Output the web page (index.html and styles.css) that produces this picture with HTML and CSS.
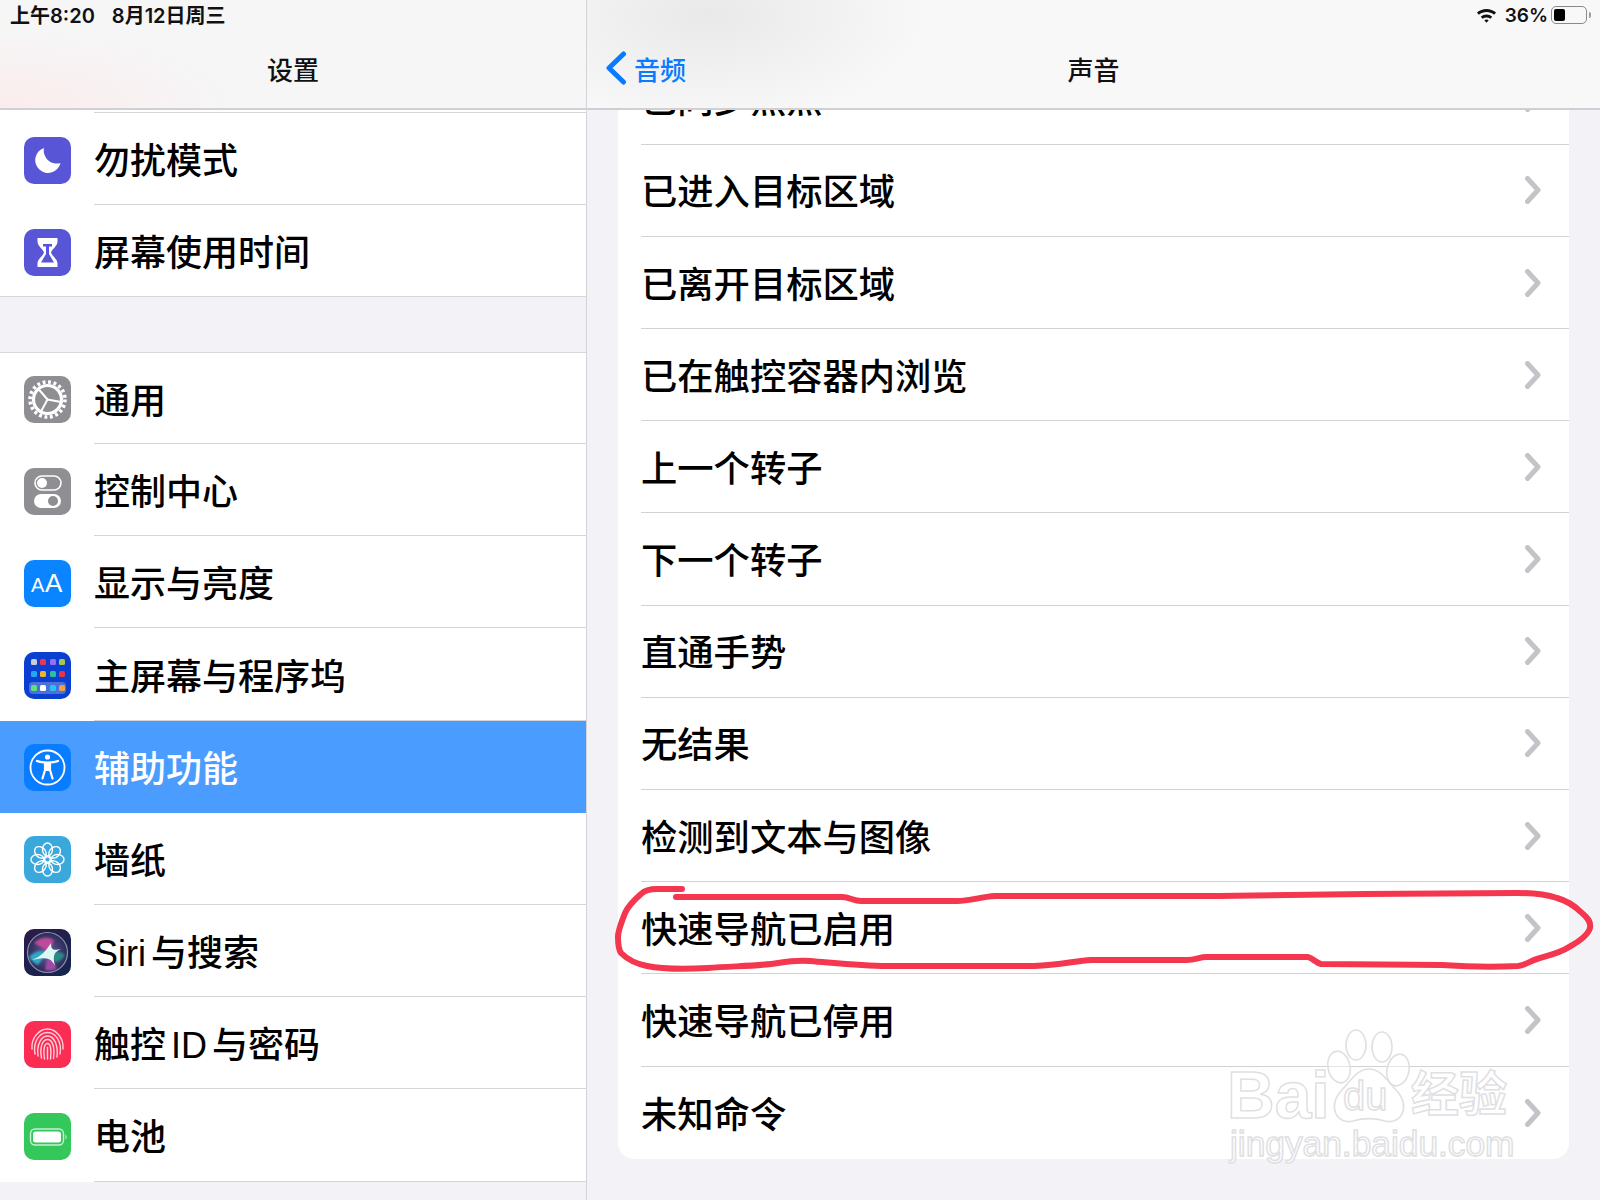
FILE: index.html
```html
<!DOCTYPE html>
<html lang="zh-CN">
<head>
  <meta charset="UTF-8">
  <title>声音</title>
  <link rel="stylesheet" href="styles.css">
</head>
<body>
<div class="ipad">

  <!-- left pane -->
  <div class="side">
    <div class="top top-side">
      <div class="status">
        <span>上午8:20</span>
        <span>8月12日周三</span>
      </div>
      <div class="nav"><span class="nav-title">设置</span></div>
    </div>
    <div class="side-scroll">
      <div class="group group-first">
        <div class="item">
          <svg class="icon" viewBox="0 0 47 47"><rect width="47" height="47" rx="10" fill="#5856d6"/><path d="M20 11 A12.8 12.8 0 1 0 36.5 26 A13 13 0 0 1 20 11 Z" fill="#fff"/></svg>
          <div class="item-text">勿扰模式</div>
        </div>
        <div class="item">
          <svg class="icon" viewBox="0 0 47 47"><rect width="47" height="47" rx="10" fill="#5856d6"/><path d="M13.5 9 H33.5 V12.5 C33.5 17 28 20 27 23.5 C28 27 33.5 30 33.5 34.5 V38 H13.5 V34.5 C13.5 30 19 27 20 23.5 C19 20 13.5 17 13.5 12.5 Z" fill="#fff"/><path d="M19 15 H28 V17.5 H25 V25 L30 33.5 H17 L22 25 V17.5 H19 Z" fill="#5856d6"/></svg>
          <div class="item-text">屏幕使用时间</div>
        </div>
      </div>

      <div class="group">
        <div class="item">
          <svg class="icon" viewBox="0 0 47 47"><rect width="47" height="47" rx="10" fill="#8e8e93"/><circle cx="23.5" cy="23.5" r="17.5" fill="none" stroke="#fff" stroke-width="3.6" stroke-dasharray="2.9 2.6"/><circle cx="23.5" cy="23.5" r="14" fill="none" stroke="#fff" stroke-width="3.2"/><path d="M23.5 23.5 L14.5 13 M23.5 23.5 L37 26 M23.5 23.5 L17 35.5" stroke="#fff" stroke-width="2" fill="none"/></svg>
          <div class="item-text">通用</div>
        </div>
        <div class="item">
          <svg class="icon" viewBox="0 0 47 47"><rect width="47" height="47" rx="10" fill="#8e8e93"/><rect x="11" y="8" width="26" height="14" rx="7" fill="none" stroke="#fff" stroke-width="1.6"/><circle cx="18" cy="15" r="5" fill="#fff"/><rect x="10" y="26" width="27" height="14" rx="7" fill="#fff"/><circle cx="29" cy="33" r="5" fill="#8e8e93"/></svg>
          <div class="item-text">控制中心</div>
        </div>
        <div class="item">
          <svg class="icon" viewBox="0 0 47 47"><rect width="47" height="47" rx="10" fill="#0a84ff"/><text x="7" y="32" class="icon-a-small">A</text><text x="21" y="32" class="icon-a-big">A</text></svg>
          <div class="item-text">显示与亮度</div>
        </div>
        <div class="item">
          <svg class="icon" viewBox="0 0 47 47">
            <rect width="47" height="47" rx="10" fill="#0b3fd0"/>
            <rect x="7" y="7" width="6" height="6" rx="1.5" fill="#c9cdd8"/><rect x="16" y="7" width="6" height="6" rx="1.5" fill="#e8385a"/><rect x="26" y="7" width="6" height="6" rx="1.5" fill="#9a6cf0"/><rect x="35" y="7" width="6" height="6" rx="1.5" fill="#a8c84a"/>
            <rect x="7" y="19" width="6" height="6" rx="1.5" fill="#22a7f0"/><rect x="16" y="19" width="6" height="6" rx="1.5" fill="#f0b429"/><rect x="26" y="19" width="6" height="6" rx="1.5" fill="#2cc09a"/><rect x="35" y="19" width="6" height="6" rx="1.5" fill="#e8344a"/>
            <rect x="5" y="30" width="37" height="12" rx="4" fill="#4a72d8"/>
            <rect x="7" y="33" width="6" height="6" rx="1.5" fill="#5ee07a"/><rect x="16" y="33" width="6" height="6" rx="1.5" fill="#fff"/><rect x="26" y="33" width="6" height="6" rx="1.5" fill="#2cc0f0"/><rect x="35" y="33" width="6" height="6" rx="1.5" fill="#f0a040"/>
          </svg>
          <div class="item-text">主屏幕与程序坞</div>
        </div>
        <div class="item item-active">
          <svg class="icon" viewBox="0 0 47 47"><rect width="47" height="47" rx="10" fill="#0a7cff"/><circle cx="23.5" cy="23.5" r="17" fill="none" stroke="#fff" stroke-width="1.8"/><circle cx="23.5" cy="13" r="2.6" fill="#fff"/><path d="M13 17 C18 19 29 19 34 17 M21 19.5 V26 L18.5 34.5 M26 19.5 V26 L28.5 34.5 M21 26 H26" fill="none" stroke="#fff" stroke-width="2.2" stroke-linecap="round"/><path d="M21 19 H26 V26 H21 Z" fill="#fff"/></svg>
          <div class="item-text">辅助功能</div>
        </div>
        <div class="item">
          <svg class="icon" viewBox="0 0 47 47">
            <rect width="47" height="47" rx="10" fill="#3ba8db"/>
            <g fill="none" stroke="#fff" stroke-width="1.4">
              <circle cx="23.5" cy="23.5" r="2.8"/>
              <ellipse cx="23.5" cy="13.5" rx="5" ry="6.5"/>
              <ellipse cx="23.5" cy="33.5" rx="5" ry="6.5"/>
              <ellipse cx="13.5" cy="23.5" rx="6.5" ry="5"/>
              <ellipse cx="33.5" cy="23.5" rx="6.5" ry="5"/>
              <ellipse cx="16.4" cy="16.4" rx="5" ry="6.5" transform="rotate(-45 16.4 16.4)"/>
              <ellipse cx="30.6" cy="16.4" rx="5" ry="6.5" transform="rotate(45 30.6 16.4)"/>
              <ellipse cx="16.4" cy="30.6" rx="5" ry="6.5" transform="rotate(45 16.4 30.6)"/>
              <ellipse cx="30.6" cy="30.6" rx="5" ry="6.5" transform="rotate(-45 30.6 30.6)"/>
            </g>
          </svg>
          <div class="item-text">墙纸</div>
        </div>
        <div class="item">
          <svg class="icon" viewBox="0 0 47 47">
            <defs>
              <linearGradient id="siriBg" x1="0" y1="0" x2="1" y2="1"><stop offset="0" stop-color="#2c1a4a"/><stop offset="1" stop-color="#14274f"/></linearGradient>
              <radialGradient id="siriDisc" cx="0.5" cy="0.5" r="0.5"><stop offset="0" stop-color="#6a5a9a"/><stop offset="1" stop-color="#2a2c58"/></radialGradient>
              <filter id="siriSoft" x="-20%" y="-20%" width="140%" height="140%"><feGaussianBlur stdDeviation="1.2"/></filter>
              <filter id="siriEdge" x="-20%" y="-20%" width="140%" height="140%"><feGaussianBlur stdDeviation="0.4"/></filter>
            </defs>
            <rect width="47" height="47" rx="10" fill="url(#siriBg)"/>
            <circle cx="23.5" cy="23.5" r="20" fill="url(#siriDisc)" stroke="#8d92a8" stroke-width="1.2"/>
            <g filter="url(#siriSoft)">
              <path d="M10 14 C16 8 26 7 30 12 L25 23 Z" fill="#c04a9a"/>
              <path d="M5 28 C10 22 18 21 24 23 L14 36 C10 34 7 32 5 28 Z" fill="#2fa8c8"/>
              <path d="M24 23 C30 22 36 22 41 26 C38 32 32 34 30 32 Z" fill="#2a8a88"/>
              <path d="M24 23 L33 40 C28 42 24 42 21 41 Z" fill="#a04aa8"/>
            </g>
            <g filter="url(#siriEdge)">
              <path d="M8 31 C15 28 20 25 27 14 C27 20 28 22 37 20 C31 23 28 25 31 37 C27 30 25 27 8 31 Z" fill="#dff8f4"/>
            </g>
          </svg>
          <div class="item-text">Siri 与搜索</div>
        </div>
        <div class="item">
          <svg class="icon" viewBox="0 0 47 47">
            <rect width="47" height="47" rx="10" fill="#fb2d55"/>
            <g fill="none" stroke="#ffd3dc" stroke-width="1.4" stroke-linecap="round">
              <path d="M8 28 C7 17 15 8 23.5 8 C32 8 40 17 39 28"/>
              <path d="M11 33 C9 21 15 11.5 23.5 11.5 C32 11.5 38 21 36 33"/>
              <path d="M14 35 C12.5 24 17 15 23.5 15 C30 15 34.5 24 33 36"/>
              <path d="M17.5 37 C15.5 26 18.5 18.5 23.5 18.5 C28.5 18.5 31 26 29.5 37.5"/>
              <path d="M20.5 38 C19 28 20.5 22.5 23.5 22.5 C26.5 22.5 27.5 28 26.5 38"/>
              <path d="M23.5 26.5 V38"/>
            </g>
          </svg>
          <div class="item-text">触控 ID 与密码</div>
        </div>
        <div class="item">
          <svg class="icon" viewBox="0 0 47 47"><rect width="47" height="47" rx="10" fill="#34c759"/><rect x="6.5" y="16" width="33" height="16" rx="4.5" fill="none" stroke="#c6f0d2" stroke-width="1.4"/><rect x="9" y="18.5" width="28" height="11" rx="2.5" fill="#fff"/><path d="M41.5 21.5 C43 22 43 26 41.5 26.5 Z" fill="#c6f0d2"/></svg>
          <div class="item-text">电池</div>
        </div>
      </div>
    </div>
  </div>

  <!-- right pane -->
  <div class="main">
    <div class="top top-main">
      <div class="status status-right">
        <svg class="wifi" viewBox="0 0 22 16"><path d="M1 5.5 C6.5 0.5 15.5 0.5 21 5.5 L19 7.7 C14.5 3.8 7.5 3.8 3 7.7 Z M5 9.8 C8.5 6.8 13.5 6.8 17 9.8 L15 12 C12.6 10.2 9.4 10.2 7 12 Z M8.7 13.5 C10 12.5 12 12.5 13.3 13.5 L11 16 Z" fill="#111"/></svg>
        <span class="percent">36%</span>
        <span class="battery"><span class="battery-level"></span></span>
        <span class="battery-nub"></span>
      </div>
      <div class="nav">
        <div class="back">
          <svg class="back-arrow" viewBox="0 0 22 34"><path d="M18.5 3 L4 17 L18.5 31" fill="none" stroke="#0a7aff" stroke-width="5" stroke-linecap="round" stroke-linejoin="round"/></svg>
          <span>音频</span>
        </div>
        <span class="nav-title">声音</span>
      </div>
    </div>

    <div class="main-scroll">
      <div class="card">
        <div class="row"><div class="row-inner"><span>已同步焦点</span><svg class="chev" viewBox="0 0 16 28"><path d="M2.5 2.5 L13 14 L2.5 25.5"/></svg></div></div>
        <div class="row"><div class="row-inner"><span>已进入目标区域</span><svg class="chev" viewBox="0 0 16 28"><path d="M2.5 2.5 L13 14 L2.5 25.5"/></svg></div></div>
        <div class="row"><div class="row-inner"><span>已离开目标区域</span><svg class="chev" viewBox="0 0 16 28"><path d="M2.5 2.5 L13 14 L2.5 25.5"/></svg></div></div>
        <div class="row"><div class="row-inner"><span>已在触控容器内浏览</span><svg class="chev" viewBox="0 0 16 28"><path d="M2.5 2.5 L13 14 L2.5 25.5"/></svg></div></div>
        <div class="row"><div class="row-inner"><span>上一个转子</span><svg class="chev" viewBox="0 0 16 28"><path d="M2.5 2.5 L13 14 L2.5 25.5"/></svg></div></div>
        <div class="row"><div class="row-inner"><span>下一个转子</span><svg class="chev" viewBox="0 0 16 28"><path d="M2.5 2.5 L13 14 L2.5 25.5"/></svg></div></div>
        <div class="row"><div class="row-inner"><span>直通手势</span><svg class="chev" viewBox="0 0 16 28"><path d="M2.5 2.5 L13 14 L2.5 25.5"/></svg></div></div>
        <div class="row"><div class="row-inner"><span>无结果</span><svg class="chev" viewBox="0 0 16 28"><path d="M2.5 2.5 L13 14 L2.5 25.5"/></svg></div></div>
        <div class="row"><div class="row-inner"><span>检测到文本与图像</span><svg class="chev" viewBox="0 0 16 28"><path d="M2.5 2.5 L13 14 L2.5 25.5"/></svg></div></div>
        <div class="row"><div class="row-inner"><span>快速导航已启用</span><svg class="chev" viewBox="0 0 16 28"><path d="M2.5 2.5 L13 14 L2.5 25.5"/></svg></div></div>
        <div class="row"><div class="row-inner"><span>快速导航已停用</span><svg class="chev" viewBox="0 0 16 28"><path d="M2.5 2.5 L13 14 L2.5 25.5"/></svg></div></div>
        <div class="row row-last"><div class="row-inner"><span>未知命令</span><svg class="chev" viewBox="0 0 16 28"><path d="M2.5 2.5 L13 14 L2.5 25.5"/></svg></div></div>
      </div>
    </div>
  </div>

  <!-- red pen mark drawn on the screenshot -->
  <svg class="ink" viewBox="0 0 1600 1200">
    <path d="M682 889 L657 889 C650 889 645 890 641 894 C633 901 628 906 625 913 C621 924 618 930 618 937 C618 945 619 950 621 953 C628 960 637 964 647 966 C667 970 690 969 708 968 C735 966 760 966 778 963 C790 961 800 960 810 961 C835 963 860 966 887 966 L1034 966 C1060 965 1075 961 1091 960 L1187 960 C1195 960 1200 957 1206 957 L1308 957 C1314 959 1316 963 1321 964 L1442 965 C1470 967 1500 967 1518 966 C1526 965 1530 961 1537 959 C1550 955 1560 953 1569 947 C1580 941 1588 935 1590 928 C1591 922 1588 918 1582 913 C1575 906 1568 901 1557 898 C1545 894 1532 893 1518 893 L1365 894 L1219 896 L995 896 C980 897 970 901 957 901 L861 901 C853 901 850 897 842 897 L676 897" fill="none" stroke="#f5364f" stroke-width="6" stroke-linecap="round" stroke-linejoin="round"/>
  </svg>

  <!-- baidu watermark -->
  <div class="mark">
    <svg class="mark-paw" viewBox="0 0 90 100">
      <g fill="#fff" fill-opacity="0.4" stroke="#e0e0e3" stroke-width="1.6">
        <ellipse cx="14" cy="42" rx="11" ry="16" transform="rotate(-12 14 42)"/>
        <ellipse cx="31" cy="20" rx="10" ry="15"/>
        <ellipse cx="57" cy="22" rx="10" ry="15"/>
        <ellipse cx="73" cy="45" rx="11" ry="16" transform="rotate(12 73 45)"/>
        <path d="M44 44 C56 44 62 56 72 66 C86 82 76 100 60 96 C50 93 38 93 28 96 C12 100 2 82 16 66 C26 56 32 44 44 44 Z"/>
      </g>
    </svg>
    <span class="mark-bai">Bai</span>
    <span class="mark-du">du</span>
    <span class="mark-cn">经验</span>
    <span class="mark-url">jingyan.baidu.com</span>
  </div>

</div>
</body>
</html>
```

FILE: styles.css
```css
* { box-sizing: border-box; }
html, body { margin: 0; padding: 0; }
body { font-family: "Liberation Sans", "Noto Sans CJK SC", sans-serif; color: #000; }

.ipad { position: relative; display: flex; width: 1600px; height: 1200px; overflow: hidden; background: #f2f2f7; }

/* panes */
.side { display: flex; flex-direction: column; width: 587px; border-right: 1px solid #d3d3d8; background: #f2f2f7; }
.main { display: flex; flex-direction: column; flex: 1; min-width: 0; }

.top { height: 110px; flex-shrink: 0; border-bottom: 2px solid #d0d0d4; }
.top-side { background: radial-gradient(240px 80px at 0 100%, #fbecec, rgba(251, 236, 236, 0)), #f6f6f7; }
.top-main { background: radial-gradient(220px 110px at 120px 15px, #e9e9e9, rgba(233, 233, 233, 0)), #f8f8f9; }

.status { display: flex; align-items: center; gap: 17px; height: 28px; padding-left: 10px; font-family: Inter, "Noto Sans CJK SC", sans-serif; font-size: 20px; font-weight: 600; color: #111; }
.status-right { justify-content: flex-end; gap: 0; padding: 2px 9px 0 0; }
.wifi { width: 21px; height: 16px; margin-right: 8px; }
.percent { font-size: 19px; margin-right: 3px; }
.battery { display: flex; align-items: center; width: 36px; height: 18px; padding: 2px; border: 1.5px solid #8a8a8e; border-radius: 5px; }
.battery-level { display: block; width: 11px; height: 12px; border-radius: 2px; background: #000; }
.battery-nub { width: 2px; height: 6px; margin-left: 2px; border-radius: 0 2px 2px 0; background: #9a9a9e; }

.nav { position: relative; display: flex; align-items: center; justify-content: center; height: 80px; }
.nav-title { font-size: 26px; font-weight: 500; color: #111; }
.back { position: absolute; left: 18px; top: 0; bottom: 0; display: flex; align-items: center; gap: 7px; color: #0a7aff; font-size: 26px; font-weight: 500; }
.back-arrow { width: 22px; height: 34px; }

/* settings list on the left */
.side-scroll { flex: 1; overflow: hidden; }
.group { margin-top: 54.8px; background: #fff; border-top: 1px solid #d8d8dc; }
.group .item:first-child { height: 91px; }
.group-first { margin-top: 0; border-top: 0; padding-top: 3px; }
.group-first .item:first-child { height: 92.1px; }

.item { display: flex; align-items: center; height: 92.2px; padding-left: 24px; position: relative; }
.item::after { content: ""; position: absolute; left: 94px; right: 0; bottom: 0; height: 1px; background: #d6d6da; }
.group-first .item:first-child::before { content: ""; position: absolute; left: 94px; right: 0; top: -1px; height: 1px; background: #d6d6da; }
.group-first .item:last-child::after { left: 0; }
.item-active { background: #4a9dff; color: #fff; }
.item-active::after { display: none; }
.icon { width: 47px; height: 47px; flex-shrink: 0; margin-top: 2px; }
.icon-a-small { font: 400 20px "Liberation Sans", sans-serif; fill: #fff; }
.icon-a-big { font: 400 26px "Liberation Sans", sans-serif; fill: #fff; }
.item-text { margin: 6px 0 0 23px; font-size: 36px; font-weight: 500; line-height: 44px; word-spacing: -5px; white-space: nowrap; }

/* right list */
.main-scroll { flex: 1; overflow: hidden; padding: 0 31px; }
.card { margin-top: -57.4px; background: #fff; border-radius: 0 0 16px 16px; }
.row { height: 92.18px; padding-left: 23px; }
.row-inner { display: flex; align-items: center; justify-content: space-between; height: 100%; padding-right: 28px; border-bottom: 1px solid #d2d2d6; font-size: 36.3px; font-weight: 500; white-space: nowrap; }
.row-inner span { padding-bottom: 2px; }
.row-last .row-inner { border-bottom: 0; }
.chev { width: 16px; height: 28px; }
.chev path { fill: none; stroke: #c4c4c8; stroke-width: 5; stroke-linecap: round; stroke-linejoin: round; }

/* overlays */
.ink { position: absolute; left: 0; top: 0; width: 1600px; height: 1200px; pointer-events: none; }

.mark { position: absolute; left: 1225px; top: 1035px; width: 300px; height: 135px; color: #fff; }
.mark span { position: absolute; white-space: nowrap; -webkit-text-stroke: 1.5px #e0e0e3; }
.mark-paw { position: absolute; left: 100px; top: -10px; width: 90px; height: 100px; }
.mark-bai { left: 2px; top: 30px; font-size: 66px; line-height: 60px; font-weight: 700; }
.mark-du { left: 118px; top: 41px; font-size: 40px; line-height: 40px; }
.mark-cn { left: 186px; top: 32px; font-size: 48px; line-height: 56px; font-weight: 700; }
.mark-url { left: 5px; top: 91px; font-size: 35.3px; line-height: 36px; }
```
